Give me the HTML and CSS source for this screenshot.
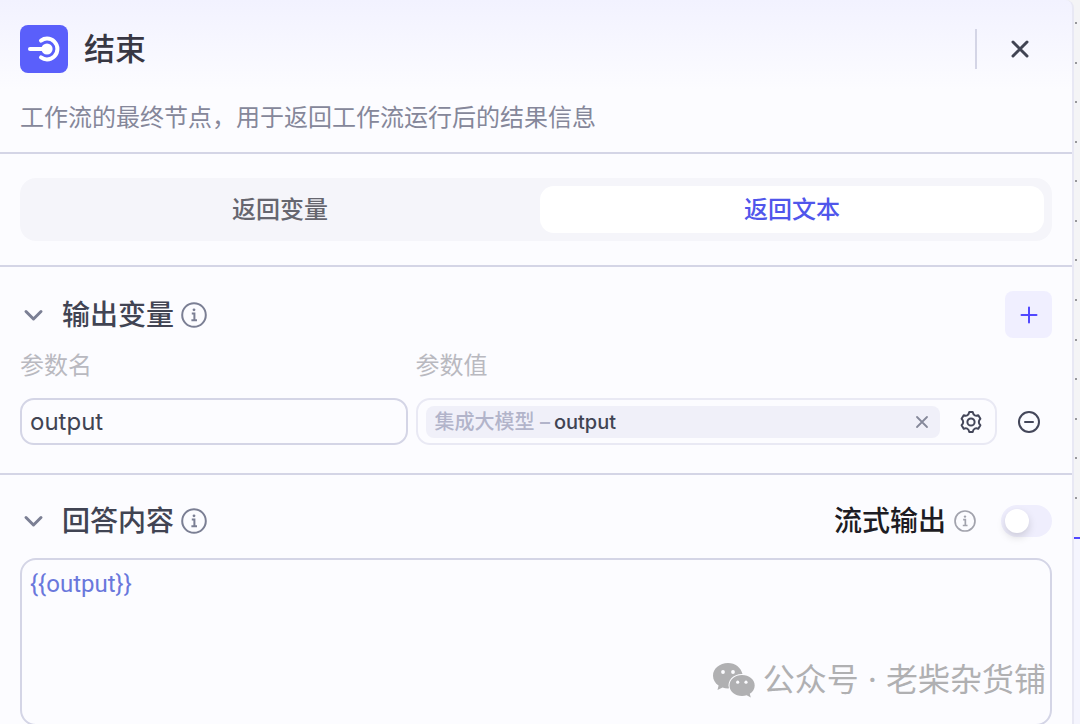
FILE: index.html
```html
<!doctype html>
<html lang="zh-CN">

<head>
    <meta charset="utf-8">
    <meta name="viewport" content="width=device-width, initial-scale=1">
    <title>结束</title>
    <link rel="stylesheet" href="styles.css">
</head>
<body>
  <div class="workspace">

    <main class="panel">
      <header class="panel-header">
        <div class="title-row">
          <svg class="node-icon" viewBox="0 0 48 48" aria-hidden="true">
            <rect width="48" height="48" rx="8" fill="#5a5ffb"/>
            <path d="M10 24H27" stroke="#fff" stroke-width="4" stroke-linecap="round"/>
            <circle cx="27" cy="24" r="5.6" fill="#fff"/>
            <path d="M21 15.6C22.8 14.3 24.8 13.6 27 13.6A10.4 10.4 0 0 1 27 34.4C24.8 34.4 22.8 33.7 21 32.4" fill="none" stroke="#fff" stroke-width="4" stroke-linecap="round"/>
          </svg>
          <h1>结束</h1>
          <button type="button" class="close-button" aria-label="关闭">
            <svg width="20" height="20" viewBox="0 0 20 20"><path d="M3 3L17 17M17 3L3 17" stroke="#414453" stroke-width="3" stroke-linecap="round"/></svg>
          </button>
        </div>
        <p class="description">工作流的最终节点，用于返回工作流运行后的结果信息</p>
      </header>

      <section class="section">
        <div class="tabs" role="tablist">
          <button type="button" class="tab" role="tab" aria-selected="false">返回变量</button>
          <button type="button" class="tab active" role="tab" aria-selected="true">返回文本</button>
        </div>
      </section>

      <section class="section">
        <div class="section-head">
          <button type="button" class="icon-button" aria-label="收起输出变量">
            <svg width="28" height="28" viewBox="0 0 28 28"><path d="M6 10.5L13.5 18L21 10.5" fill="none" stroke="#7b7f94" stroke-width="3" stroke-linecap="round" stroke-linejoin="round"/></svg>
          </button>
          <h2>输出变量</h2>
          <svg class="info" viewBox="0 0 26 26" aria-hidden="true">
            <circle cx="13" cy="13" r="11.8"/>
            <path d="M10.8 11.4H13.4V18M10.4 18.3H16"/>
            <circle class="dot" cx="13" cy="7.8" r="1.4"/>
          </svg>
          <button type="button" class="add-button" aria-label="添加">
            <svg width="18" height="18" viewBox="0 0 18 18"><path d="M9 1.5V16.5M1.5 9H16.5" stroke="#5147ff" stroke-width="2" stroke-linecap="round"/></svg>
          </button>
        </div>

        <div class="params">
          <label for="param-name">参数名</label>
          <span class="value-label">参数值</span>

          <input type="text" id="param-name" class="name-input" value="output">
          <div class="value-box">
            <div class="chip">
              <span class="chip-source">集成大模型 –</span>
              <span class="chip-name">output</span>
              <button type="button" class="icon-button chip-clear" aria-label="清除">
                <svg width="14" height="14" viewBox="0 0 14 14"><path d="M2 2L12 12M12 2L2 12" stroke="#85889a" stroke-width="1.8" stroke-linecap="round"/></svg>
              </button>
            </div>
            <button type="button" class="icon-button" aria-label="设置">
              <svg width="24" height="24" viewBox="0 0 24 24" fill="none" stroke="#44475a" stroke-width="2" stroke-linejoin="round">
                <path d="M10.300 2H13.700Q14.300 4.800 15.800 5.400T19.300 5.200L21.400 8.700Q19.800 10.200 19.800 12T21.400 15.300L19.300 18.800Q17.300 18 15.800 18.600T13.700 22H10.300Q9.700 19.200 8.200 18.600T4.700 18.800L2.600 15.300Q4.200 13.800 4.200 12T2.600 8.700L4.700 5.200Q6.700 6 8.200 5.400T10.300 2Z"/>
                <circle cx="12" cy="12" r="3.6"/>
              </svg>
            </button>
          </div>
          <button type="button" class="icon-button" aria-label="删除">
            <svg width="24" height="24" viewBox="0 0 24 24" fill="none" stroke="#44475a" stroke-width="2" stroke-linecap="round"><circle cx="12" cy="12" r="10"/><path d="M8 12H16"/></svg>
          </button>
        </div>
      </section>

      <section class="section answer">
        <div class="section-head">
          <button type="button" class="icon-button" aria-label="收起回答内容">
            <svg width="28" height="28" viewBox="0 0 28 28"><path d="M6 10.5L13.5 18L21 10.5" fill="none" stroke="#7b7f94" stroke-width="3" stroke-linecap="round" stroke-linejoin="round"/></svg>
          </button>
          <h2><label for="answer">回答内容</label></h2>
          <svg class="info" viewBox="0 0 26 26" aria-hidden="true">
            <circle cx="13" cy="13" r="11.8"/>
            <path d="M10.8 11.4H13.4V18M10.4 18.3H16"/>
            <circle class="dot" cx="13" cy="7.8" r="1.4"/>
          </svg>
          <div class="stream">
            <label for="stream">流式输出</label>
            <svg class="info small" viewBox="0 0 26 26" aria-hidden="true">
              <circle cx="13" cy="13" r="11.8"/>
              <path d="M10.8 11.4H13.4V18M10.4 18.3H16"/>
              <circle class="dot" cx="13" cy="7.8" r="1.4"/>
            </svg>
            <input type="checkbox" id="stream" class="switch" role="switch">
          </div>
        </div>
        <textarea id="answer" spellcheck="false">{{output}}</textarea>
      </section>
    </main>

    <!-- edge of the canvas behind the panel -->
    <aside class="canvas">
      <div class="dots">
        <i></i><i></i><i></i><i></i><i></i><i></i><i></i><i></i><i></i><i></i><i></i><i></i><i></i>
      </div>
      <div class="next-node"></div>
    </aside>

    <div class="watermark">
      <svg width="42" height="35" viewBox="0 0 42 35" aria-hidden="true">
        <path fill="#b0b0b2" d="M15 0C6.700 0 0 5.600 0 12.700C0 16.700 2.200 20.200 5.600 22.600L4.500 27L9.500 24.500C11.200 25 13 25.400 15 25.400L16 25.300C13.700 17.500 20.500 10.600 29.500 11C28 4.600 22.200 0 15 0Z"/>
        <path fill="#b0b0b2" d="M29 12C22 12 16.500 16.600 16.500 22.500S22 33 29 33C30.700 33 32.200 32.700 33.700 32.200L37.800 34.500L36.800 30.800C39.800 28.900 41.700 26 41.700 22.500C41.700 16.600 36 12 29 12Z"/>
        <g fill="#fcfcff"><circle cx="10" cy="9" r="1.900"/><circle cx="20" cy="9" r="1.900"/><circle cx="24.700" cy="19.200" r="1.600"/><circle cx="33" cy="19.200" r="1.600"/></g>
      </svg>
      <span>公众号 · 老柴杂货铺</span>
    </div>

  </div>
</body>
</html>
```
FILE: styles.css
```css
* {
  box-sizing: border-box;
}

body {
  margin: 0;
  height: 100vh;
  overflow: hidden;
  background-color: #f4f4f6;
  font-family: Inter, "Noto Sans CJK SC", sans-serif;
  color: #414453;
}

button, input, textarea {
  font-family: inherit;
  color: inherit;
}

button {
  border: none;
  background: none;
  padding: 0;
  cursor: pointer;
}

h1, h2, p {
  margin: 0;
}

svg {
  display: block;
  flex: none;
}

.workspace {
  display: flex;
  position: relative;
  height: 100%;
}

.panel {
  flex: 1;
  min-width: 0;
  display: flex;
  flex-direction: column;
  border-right: 2px solid #e8e8f4;
  border-top-right-radius: 8px;
  background: linear-gradient(#f2f2ff, #fcfcff 90px);
}

.panel-header {
  padding: 24px 20px 16px;
  border-bottom: 2px solid #d4d5e6;
}

.title-row {
  display: flex;
  align-items: center;
  height: 50px;
  gap: 16px;
}

.node-icon {
  width: 48px;
  height: 48px;
}

h1 {
  font-size: 31px;
  font-weight: 500;
  line-height: 46px;
  color: #383743;
}

.close-button {
  display: flex;
  align-items: center;
  justify-content: flex-end;
  width: 66px;
  height: 40px;
  margin-left: auto;
  margin-right: 11px;
  padding-right: 11px;
  border-left: 2px solid #d4d5e6;
}

.description {
  margin-top: 26px;
  font-size: 24px;
  line-height: 36px;
  color: #85879a;
}

.section {
  padding: 24px 20px;
  border-bottom: 2px solid #d4d5e6;
}

.tabs {
  display: grid;
  grid-template-columns: 1fr 1fr;
  gap: 8px;
  padding: 8px;
  border-radius: 16px;
  background-color: #f5f5fa;
}

.tab {
  height: 47px;
  border-radius: 14px;
  font-size: 24px;
  font-weight: 500;
  line-height: 36px;
  color: #66666f;
}

.tab.active {
  background-color: #fff;
  color: #5056eb;
}

.section-head {
  display: flex;
  align-items: center;
  height: 47px;
}

.icon-button {
  display: flex;
  align-items: center;
  justify-content: center;
}

h2 {
  margin: 0 7px 0 14px;
  font-size: 28px;
  font-weight: 500;
  line-height: 40px;
}

.info {
  width: 26px;
  height: 26px;
  fill: none;
  stroke: #7b7f94;
  stroke-width: 2;
}

.info .dot {
  fill: #7b7f94;
  stroke: none;
}

.info.small {
  width: 22px;
  height: 22px;
  stroke: #a2a3ad;
}

.info.small .dot {
  fill: #a2a3ad;
}

.add-button {
  display: flex;
  align-items: center;
  justify-content: center;
  width: 47px;
  height: 47px;
  margin-left: auto;
  border-radius: 8px;
  background-color: #f0efff;
}

/* name | value | remove */
.params {
  display: grid;
  grid-template-columns: 2fr 3fr 47px;
  column-gap: 8px;
  row-gap: 14px;
  padding: 10px 0 4px;
}

.params > label,
.value-label {
  font-size: 24px;
  line-height: 36px;
  color: #b9b9c0;
}

.value-label {
  grid-column: 2 / 4;
}

.name-input {
  width: 100%;
  height: 47px;
  padding: 0 8px;
  border: 2px solid #d4d5e6;
  border-radius: 14px;
  background: none;
  font-size: 24px;
}

.value-box {
  display: flex;
  align-items: center;
  gap: 19px;
  height: 47px;
  padding: 0 12px 0 8px;
  border: 2px solid #e9e9f4;
  border-radius: 14px;
}

.chip {
  flex: 1;
  display: flex;
  align-items: center;
  gap: 4px;
  height: 32px;
  padding: 0 11px 0 9px;
  border-radius: 8px;
  background-color: #f0f0f9;
  font-size: 20px;
  font-weight: 500;
  line-height: 32px;
}

.chip-source {
  color: #b2b4ca;
}

.chip-clear {
  margin-left: auto;
}

.answer {
  flex: 1;
  padding: 22px 20px 0;
  border-bottom: none;
}

.stream {
  display: flex;
  align-items: center;
  margin-left: auto;
  font-size: 28px;
  font-weight: 500;
  line-height: 40px;
  color: #1d1c23;
}

.stream .info {
  margin-left: 8px;
}

.switch {
  appearance: none;
  width: 51px;
  height: 32px;
  margin: 0 0 0 25px;
  padding: 4px;
  border-radius: 16px;
  background-color: #efeefd;
}

.switch::before {
  content: "";
  display: block;
  width: 24px;
  height: 24px;
  border-radius: 50%;
  background-color: #fff;
  box-shadow: 0 4px 8px rgba(0, 0, 0, 0.15);
}

.switch:checked {
  background-color: #5056eb;
}

textarea {
  display: block;
  width: 100%;
  height: 168px;
  margin-top: 14px;
  padding: 6px 8px;
  border: 2px solid #d4d5e6;
  border-radius: 16px;
  background: none;
  resize: none;
  font-family: Roboto, "Noto Sans CJK SC", sans-serif;
  font-size: 24px;
  line-height: 36px;
  color: #6a78dc;
}

.canvas {
  width: 6px;
}

.dots {
  display: flex;
  flex-direction: column;
  justify-content: space-between;
  height: 477px;
  margin: 22px 0 38px 1px;
}

.dots i {
  width: 2px;
  height: 2px;
  background-color: #98989c;
}

.next-node {
  height: 100%;
  border-top: 2px solid #5147ff;
  background-color: #f5f5fe;
}

.watermark {
  position: absolute;
  right: 34px;
  bottom: 21px;
  display: flex;
  align-items: center;
  gap: 8px;
  font-size: 32px;
  line-height: 46px;
  color: #b0b0b2;
  pointer-events: none;
}
```
